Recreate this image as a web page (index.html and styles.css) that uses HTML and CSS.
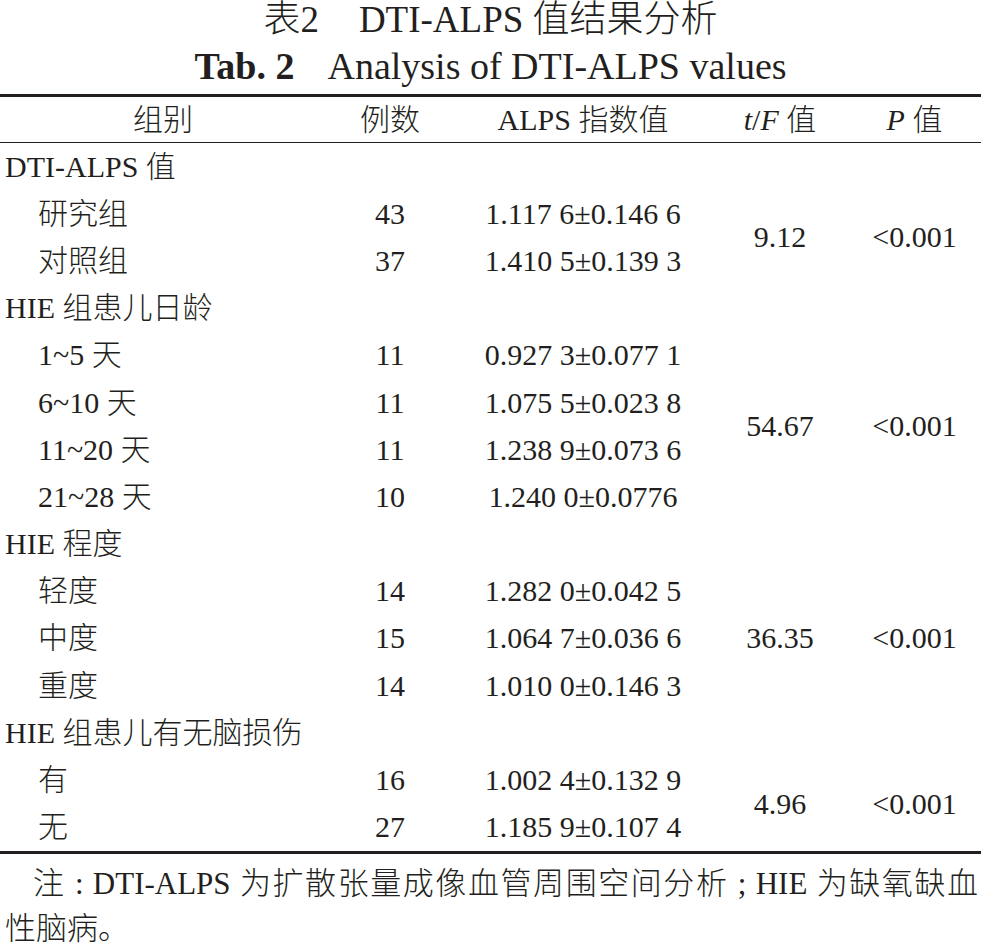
FILE: index.html
```html
<!DOCTYPE html>
<html lang="zh-CN">
<head>
<meta charset="utf-8">
<title>表2 DTI-ALPS值结果分析</title>
<link rel="stylesheet" href="styles.css">
</head>
<body>
<div class="caption">
  <div class="cap-zh"><span class="cap-label">表2</span><span class="cap-text">DTI-ALPS 值结果分析</span></div>
  <div class="cap-en"><span class="cap-label">Tab. 2</span><span class="cap-text">Analysis of DTI-ALPS values</span></div>
</div>
<table class="data">
  <colgroup>
    <col class="c-group"><col class="c-n"><col class="c-val"><col class="c-tf"><col class="c-p">
  </colgroup>
  <thead>
    <tr><th>组别</th><th>例数</th><th>ALPS 指数值</th><th><i>t</i>/<i>F</i> 值</th><th><i>P</i> 值</th></tr>
  </thead>
  <tbody>
    <tr><td class="cat">DTI-ALPS 值</td><td></td><td></td><td></td><td></td></tr>
    <tr><td class="sub">研究组</td><td>43</td><td>1.117 6±0.146 6</td><td rowspan="2">9.12</td><td rowspan="2">&lt;0.001</td></tr>
    <tr><td class="sub">对照组</td><td>37</td><td>1.410 5±0.139 3</td></tr>
    <tr><td class="cat">HIE 组患儿日龄</td><td></td><td></td><td></td><td></td></tr>
    <tr><td class="sub">1~5 天</td><td>11</td><td>0.927 3±0.077 1</td><td rowspan="4">54.67</td><td rowspan="4">&lt;0.001</td></tr>
    <tr><td class="sub">6~10 天</td><td>11</td><td>1.075 5±0.023 8</td></tr>
    <tr><td class="sub">11~20 天</td><td>11</td><td>1.238 9±0.073 6</td></tr>
    <tr><td class="sub">21~28 天</td><td>10</td><td>1.240 0±0.0776</td></tr>
    <tr><td class="cat">HIE 程度</td><td></td><td></td><td></td><td></td></tr>
    <tr><td class="sub">轻度</td><td>14</td><td>1.282 0±0.042 5</td><td rowspan="3">36.35</td><td rowspan="3">&lt;0.001</td></tr>
    <tr><td class="sub">中度</td><td>15</td><td>1.064 7±0.036 6</td></tr>
    <tr><td class="sub">重度</td><td>14</td><td>1.010 0±0.146 3</td></tr>
    <tr><td class="cat">HIE 组患儿有无脑损伤</td><td></td><td></td><td></td><td></td></tr>
    <tr><td class="sub">有</td><td>16</td><td>1.002 4±0.132 9</td><td rowspan="2">4.96</td><td rowspan="2">&lt;0.001</td></tr>
    <tr><td class="sub">无</td><td>27</td><td>1.185 9±0.107 4</td></tr>
  </tbody>
</table>
<div class="note">
  <div class="note-first">注 : DTI-ALPS 为扩散张量成像血管周围空间分析 ; HIE 为缺氧缺血</div>
  <div class="note-rest">性脑病。</div>
</div>
</body>
</html>
```

FILE: styles.css
```css
html, body {
  margin: 0;
  padding: 0;
  background: #ffffff;
}

body {
  width: 981px;
  color: #231f20;
  font-family: "Liberation Serif", "Noto Sans CJK SC", serif;
  font-weight: 300;
  font-size: 30px;
}

.caption {
  text-align: center;
}

.cap-zh {
  font-size: 37px;
  line-height: 40px;
  height: 40px;
}

.cap-zh .cap-label {
  margin-right: 40px;
}

.cap-en {
  font-size: 38px;
  line-height: 52px;
  height: 52px;
}

.cap-en .cap-label {
  font-weight: 700;
  margin-right: 33px;
}

.data {
  width: 981px;
  margin-top: 2px;
  border-collapse: collapse;
  table-layout: fixed;
  border-top: 3px solid #231f20;
  border-bottom: 3px solid #231f20;
}

.c-group { width: 326px; }
.c-n { width: 128px; }
.c-val { width: 258px; }
.c-tf { width: 136px; }
.c-p { width: 133px; }

.data th {
  font-weight: 300;
  height: 45px;
  padding: 0;
  line-height: 45px;
  text-align: center;
  vertical-align: middle;
  border-bottom: 1.5px solid #231f20;
}

.data td {
  height: 47.2px;
  padding: 0;
  line-height: 40px;
  text-align: center;
  vertical-align: middle;
  white-space: nowrap;
}

.data td.cat {
  text-align: left;
  padding-left: 5px;
}

.data td.sub {
  text-align: left;
  padding-left: 38px;
}

.note {
  margin-top: 7px;
  font-size: 31px;
  line-height: 45px;
}

.note-first {
  padding-left: 33px;
  padding-right: 3px;
  text-align: justify;
  text-align-last: justify;
}

.note-rest {
  padding-left: 5px;
}
```
